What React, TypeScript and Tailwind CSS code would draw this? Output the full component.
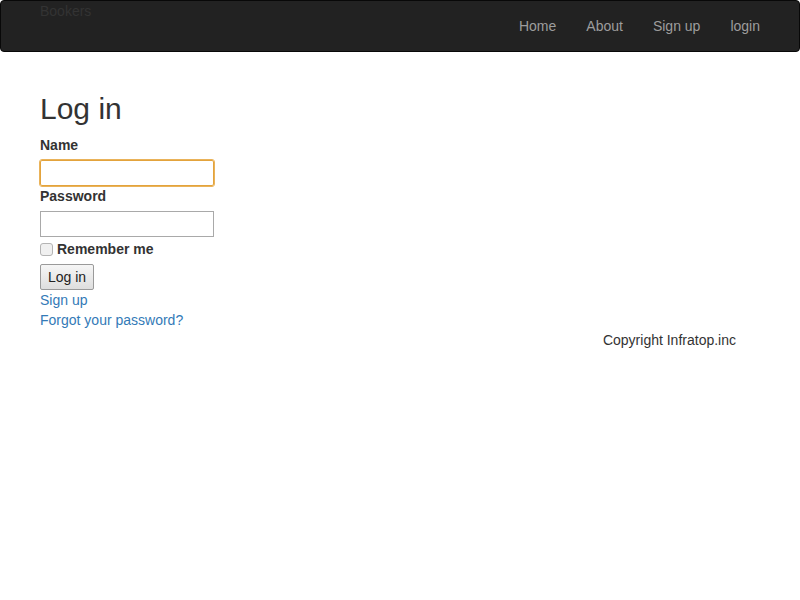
import React from "react";

const navLinks = ["Home", "About", "Sign up", "login"];

export default function App() {
  return (
    <div
      className="min-h-screen bg-white text-[14px] leading-[20px] text-[#333]"
      style={{ fontFamily: '"Liberation Sans", Arial, sans-serif' }}
    >
      {/* Navbar */}
      <nav className="flex h-[52px] items-start justify-between rounded-[4px] border border-[#080808] bg-[#222]">
        <a className="ml-[39px] text-[14px] leading-[20px] text-[#333]">Bookers</a>
        <ul className="mr-[24px] flex">
          {navLinks.map((l) => (
            <li key={l}>
              <a className="block px-[15px] py-[15px] leading-[20px] text-[#9d9d9d]">{l}</a>
            </li>
          ))}
        </ul>
      </nav>

      <div className="mx-auto w-[750px] px-[15px] pt-[40px]">
        <h1 className="mb-[10px] text-[30px] leading-[33px] font-normal">Log in</h1>

        <form className="flex flex-col items-start">
          <label className="mb-[5px] font-bold">Name</label>
          <input
            type="text"
            className="h-[26px] w-[174px] rounded-[2px] border border-[#e3a33c] px-[2px] text-[13px] outline outline-1 outline-[#eab35a]"
          />
          <label className="mb-[5px] font-bold">Password</label>
          <input
            type="password"
            className="h-[26px] w-[174px] border border-[#a9a9a9] px-[2px] text-[13px] outline-none"
          />
          <div className="mt-[2px] flex items-center">
            <span className="mr-[4px] inline-block h-[13px] w-[13px] rounded-[3px] border border-[#b4b4b4] bg-[#f0f0f0]" />
            <label className="font-bold">Remember me</label>
          </div>
          <button
            type="button"
            className="mt-[5px] h-[26px] rounded-[2px] border border-[#9a9a9a] bg-gradient-to-b from-[#f6f6f6] to-[#dedede] px-[7px] text-[14px] leading-[20px] text-[#222]"
          >
            Log in
          </button>
          <a className="text-[#337ab7]">Sign up</a>
          <a className="text-[#337ab7]">Forgot your password?</a>
        </form>

        <div className="pr-[24px] text-right">Copyright Infratop.inc</div>
      </div>
    </div>
  );
}
